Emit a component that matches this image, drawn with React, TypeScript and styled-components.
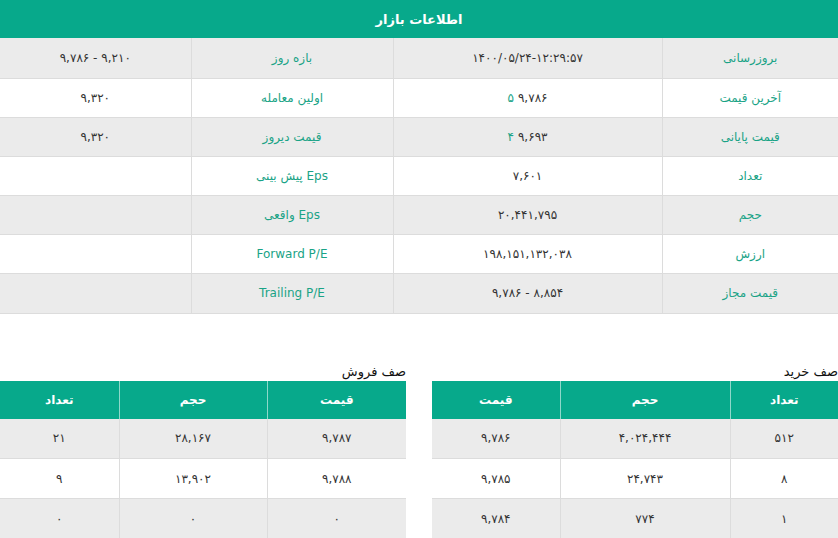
import React from 'react';
import styled, { createGlobalStyle } from 'styled-components';

const GREEN = '#07a98b';
const LABEL = '#1aa386';
const STRIPE = '#ebebeb';
const LINE = '#dcdcdc';

const GlobalStyle = createGlobalStyle`
  html, body {
    margin: 0;
    padding: 0;
    background: #fff;
    overflow: hidden;
  }
  body {
    font-family: "DejaVu Sans", "Noto Sans", sans-serif;
    color: #333;
  }
`;

const Page = styled.div`
  width: 838px;
  direction: rtl;
`;

const PanelHeader = styled.div`
  height: 38px;
  background: ${GREEN};
  color: #fff;
  font-weight: bold;
  font-size: 13px;
  display: flex;
  align-items: center;
  justify-content: center;
`;

const Table = styled.table`
  width: 100%;
  border-collapse: collapse;
  table-layout: fixed;
`;

const Col = styled.col<{ $w: number }>`
  width: ${p => p.$w}px;
`;

const Row = styled.tr<{ $h: number }>`
  height: ${p => p.$h}px;
  &:nth-child(odd) td {
    background: ${STRIPE};
  }
`;

const Cell = styled.td<{ $label?: boolean }>`
  padding: 0 6px;
  text-align: center;
  vertical-align: middle;
  font-size: 12px;
  color: ${p => (p.$label ? LABEL : '#333')};
  direction: ${p => (p.$label ? 'rtl' : 'ltr')};
  border: 1px solid ${LINE};
  border-top: none;
  white-space: nowrap;
  &:first-child { border-right: none; }
  &:last-child { border-left: none; }
`;

const Arrow = styled.span`
  color: ${LABEL};
  margin-right: 4px;
`;

const Queues = styled.div`
  margin-top: 49px;
  display: flex;
  direction: ltr;
  gap: 26px;
  overflow: hidden;
`;

const QueueBlock = styled.div<{ $w: number }>`
  flex: 0 0 ${p => p.$w}px;
  direction: rtl;
`;

const QueueTitle = styled.div`
  font-size: 13px;
  line-height: 18px;
  color: #111;
`;

const HeadCell = styled.th`
  height: 38px;
  padding: 0;
  background: ${GREEN};
  color: #fff;
  font-size: 12px;
  font-weight: bold;
  text-align: center;
  border-left: 1px solid rgba(255, 255, 255, 0.55);
  &:last-child { border-left: none; }
`;

type Info = [string, React.ReactNode, string, React.ReactNode];

const info: Info[] = [
  ['بروزرسانی', '۱۴۰۰/۰۵/۲۴-۱۲:۲۹:۵۷', 'بازه روز', '۹,۷۸۶ - ۹,۲۱۰'],
  ['آخرین قیمت', <><Arrow>۵</Arrow>۹,۷۸۶</>, 'اولین معامله', '۹,۳۲۰'],
  ['قیمت پایانی', <><Arrow>۴</Arrow>۹,۶۹۳</>, 'قیمت دیروز', '۹,۳۲۰'],
  ['تعداد', '۷,۶۰۱', 'Eps پیش بینی', ''],
  ['حجم', '۲۰,۴۴۱,۷۹۵', 'Eps واقعی', ''],
  ['ارزش', '۱۹۸,۱۵۱,۱۳۲,۰۳۸', 'Forward P/E', ''],
  ['قیمت مجاز', '۹,۷۸۶ - ۸,۸۵۴', 'Trailing P/E', ''],
];

// first and last rows are a pixel taller in the original
const infoHeights = [40, 39, 39, 39, 39, 39, 40];

const buyRows = [
  ['۵۱۲', '۴,۰۲۴,۴۴۴', '۹,۷۸۶'],
  ['۸', '۲۴,۷۴۳', '۹,۷۸۵'],
  ['۱', '۷۷۴', '۹,۷۸۴'],
];

const sellRows = [
  ['۹,۷۸۷', '۲۸,۱۶۷', '۲۱'],
  ['۹,۷۸۸', '۱۳,۹۰۲', '۹'],
  ['۰', '۰', '۰'],
];

function QueueTable({ title, heads, rows, widths, w }: {
  title: string;
  heads: string[];
  rows: string[][];
  widths: number[];
  w: number;
}) {
  return (
    <QueueBlock $w={w}>
      <QueueTitle>{title}</QueueTitle>
      <Table>
        <colgroup>
          {widths.map((cw, i) => <Col key={i} $w={cw} />)}
        </colgroup>
        <thead>
          <tr>
            {heads.map(h => <HeadCell key={h}>{h}</HeadCell>)}
          </tr>
        </thead>
        <tbody>
          {rows.map((r, i) => (
            <Row key={i} $h={40}>
              {r.map((v, j) => <Cell key={j}>{v}</Cell>)}
            </Row>
          ))}
        </tbody>
      </Table>
    </QueueBlock>
  );
}

export default function App() {
  return (
    <Page>
      <GlobalStyle />
      <PanelHeader>اطلاعات بازار</PanelHeader>
      <Table>
        <colgroup>
          <Col $w={176} />
          <Col $w={269} />
          <Col $w={202} />
          <Col $w={191} />
        </colgroup>
        <tbody>
          {info.map((r, i) => (
            <Row key={i} $h={infoHeights[i]}>
              <Cell $label>{r[0]}</Cell>
              <Cell>{r[1]}</Cell>
              <Cell $label>{r[2]}</Cell>
              <Cell>{r[3]}</Cell>
            </Row>
          ))}
        </tbody>
      </Table>
      <Queues>
        <QueueTable
          title="صف فروش"
          heads={['قیمت', 'حجم', 'تعداد']}
          rows={sellRows}
          widths={[139, 148, 119]}
          w={406}
        />
        <QueueTable
          title="صف خرید"
          heads={['تعداد', 'حجم', 'قیمت']}
          rows={buyRows}
          widths={[108, 170, 128]}
          w={406}
        />
      </Queues>
    </Page>
  );
}
